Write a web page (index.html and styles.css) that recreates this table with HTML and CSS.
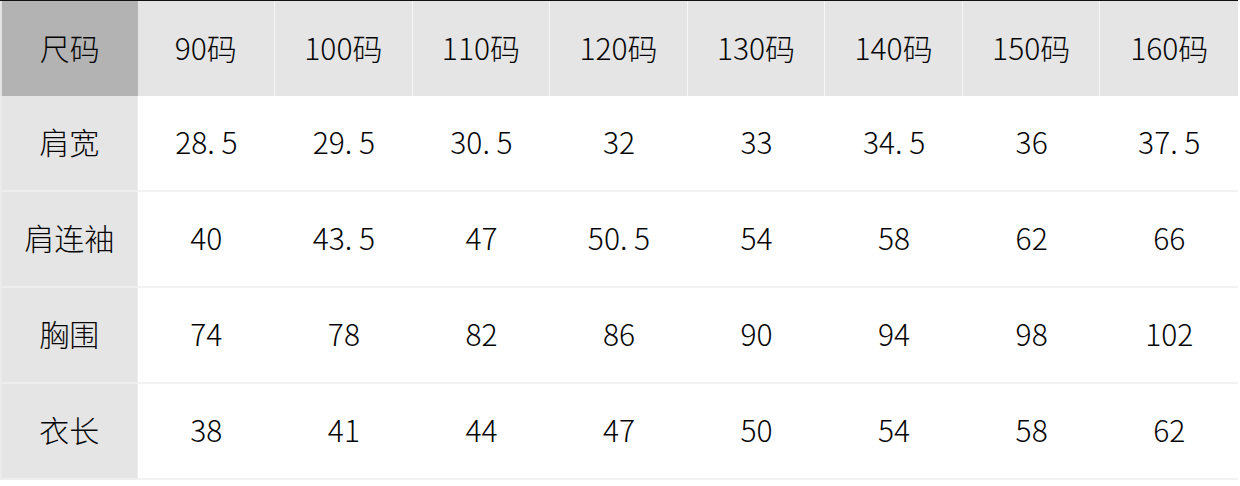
FILE: index.html
```html
<!DOCTYPE html>
<html lang="zh-CN">
<head>
<meta charset="utf-8">
<title>尺码表</title>
<link rel="stylesheet" href="styles.css">
</head>
<body>
<div class="size-table">
  <div class="cell head corner">尺码</div>
  <div class="cell head">90码</div>
  <div class="cell head">100码</div>
  <div class="cell head">110码</div>
  <div class="cell head">120码</div>
  <div class="cell head">130码</div>
  <div class="cell head">140码</div>
  <div class="cell head">150码</div>
  <div class="cell head last">160码</div>

  <div class="cell label">肩宽</div>
  <div class="cell">28. 5</div>
  <div class="cell">29. 5</div>
  <div class="cell">30. 5</div>
  <div class="cell">32</div>
  <div class="cell">33</div>
  <div class="cell">34. 5</div>
  <div class="cell">36</div>
  <div class="cell">37. 5</div>

  <div class="cell label">肩连袖</div>
  <div class="cell">40</div>
  <div class="cell">43. 5</div>
  <div class="cell">47</div>
  <div class="cell">50. 5</div>
  <div class="cell">54</div>
  <div class="cell">58</div>
  <div class="cell">62</div>
  <div class="cell">66</div>

  <div class="cell label">胸围</div>
  <div class="cell">74</div>
  <div class="cell">78</div>
  <div class="cell">82</div>
  <div class="cell">86</div>
  <div class="cell">90</div>
  <div class="cell">94</div>
  <div class="cell">98</div>
  <div class="cell">102</div>

  <div class="cell label">衣长</div>
  <div class="cell">38</div>
  <div class="cell">41</div>
  <div class="cell">44</div>
  <div class="cell">47</div>
  <div class="cell">50</div>
  <div class="cell">54</div>
  <div class="cell">58</div>
  <div class="cell">62</div>
</div>
</body>
</html>
```

FILE: styles.css
```css
html, body {
  margin: 0;
  padding: 0;
  background: #ffffff;
}

.size-table {
  display: grid;
  grid-template-columns: repeat(9, 1fr);
  width: 1238px;
  border-top: 1px solid #111111;
  font-family: "Noto Sans CJK SC", "Liberation Sans", sans-serif;
  font-size: 30px;
  font-weight: 300;
  color: #050505;
}

.cell {
  box-sizing: border-box;
  height: 96px;
  padding-bottom: 4px;
  display: flex;
  align-items: center;
  justify-content: center;
  border-bottom: 2px solid #f2f2f2;
  background: #ffffff;
  white-space: pre;
}

.head {
  height: 95px;
  padding-bottom: 4px;
  border-bottom: none;
  background: #e5e5e5;
  border-right: 1px solid #f7f7f7;
}

.head.last {
  border-right: none;
}

.head.corner {
  background: #b3b3b3;
  border-right: none;
  border-left: 2px solid #e4e4e4;
}

.label {
  background: #e5e5e5;
  border-bottom: 2px solid #eeeeee;
  border-right: 1px solid #ededed;
  border-left: 2px solid #ebebeb;
}
```
